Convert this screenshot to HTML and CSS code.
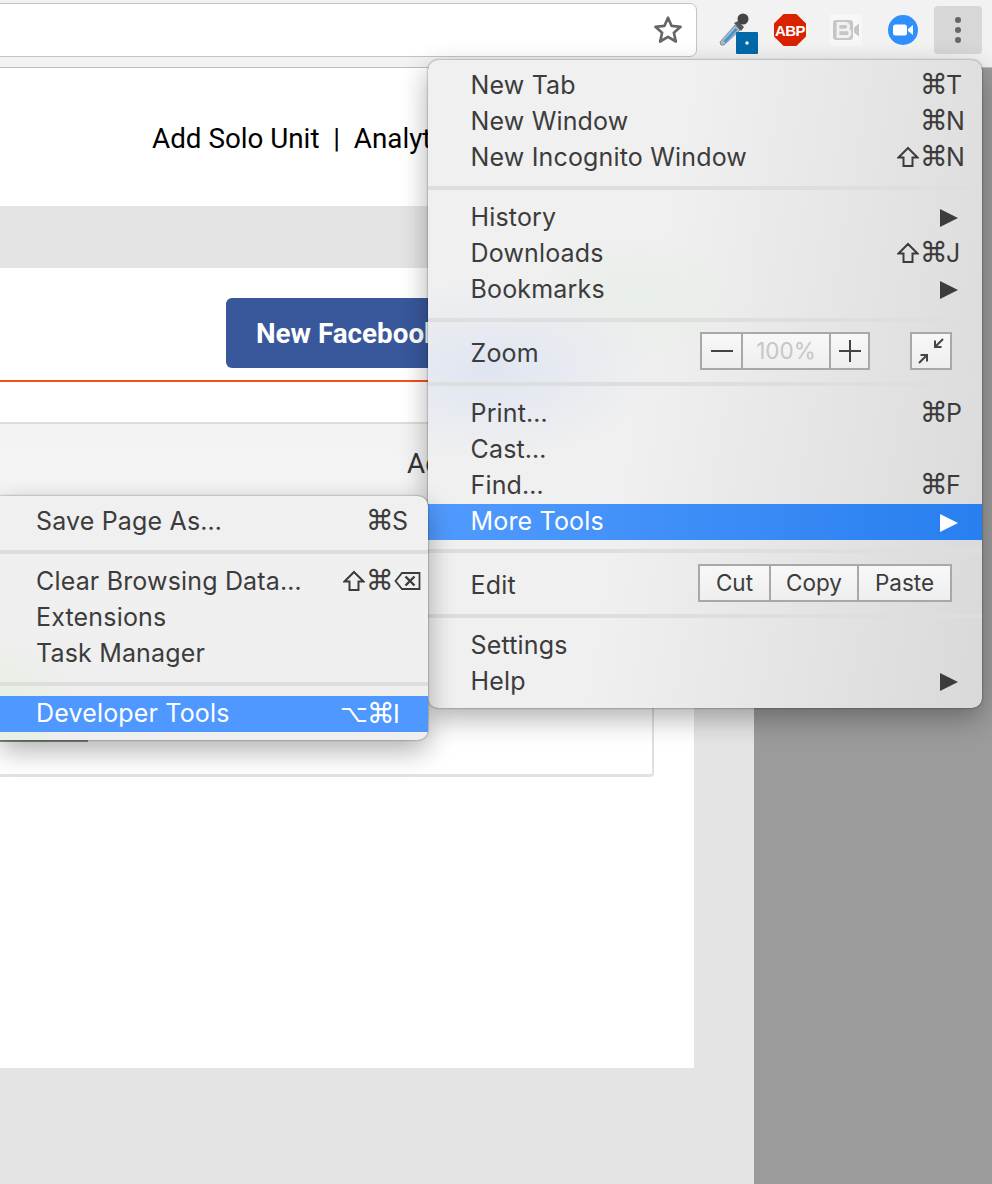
FILE: index.html
```html
<!DOCTYPE html>
<html lang="en">
<head>
<meta charset="utf-8">
<title>Chrome menu</title>
<link rel="stylesheet" href="styles.css">
</head>
<body>
<svg class="defs" width="0" height="0" aria-hidden="true">
  <symbol id="shift" viewBox="0 0 22 22"><path d="M11 2L20.500 11.500H15.500V20H6.500V11.500H1.500z" fill="none" stroke="currentColor" stroke-width="2"/></symbol>
  <symbol id="del" viewBox="0 0 27 20"><path d="M8 2H25.500V18H8L1.500 10z" fill="none" stroke="currentColor" stroke-width="1.800"/><path d="M11.500 5.500L20.500 14.500M20.500 5.500L11.500 14.500" stroke="currentColor" stroke-width="2.400"/></symbol>
</svg>
<header class="toolbar">
  <div class="urlbox">
    <svg class="star" width="32" height="32" viewBox="0 0 30 30"><path d="M15 3.500l3.400 7.700 8.400.8-6.300 5.600 1.900 8.200L15 21.500l-7.400 4.300 1.900-8.200L3.200 12l8.400-.8z" fill="none" stroke="#666" stroke-width="2.500" stroke-linejoin="round"/></svg>
  </div>
  <svg class="ic ic-drop" width="40" height="48" viewBox="0 0 40 48">
    <path d="M1 36L16 19l5 5L5 39l-3 0z" fill="#a9bac6" stroke="#8b9094" stroke-width="1"/>
    <path d="M4.500 35L16.500 22l2 2L6.500 37z" fill="#3f97d8"/>
    <path d="M15 17l4-2 6 6-3 4z" fill="#555"/>
    <circle cx="24" cy="13" r="5.500" fill="#444"/>
    <rect x="17" y="26" width="22" height="22" rx="1" fill="#0469a9"/>
    <circle cx="28" cy="37" r="1.700" fill="#fff"/>
  </svg>
  <div class="ic ic-abp"><span>ABP</span></div>
  <svg class="ic ic-b" width="32" height="32" viewBox="0 0 32 32">
    <rect width="32" height="32" fill="#f7f7f7"/>
    <rect x="3" y="6" width="20" height="20" rx="3" fill="#c6c6c6"/>
    <path d="M8 9.500h7.500a3.200 3.200 0 0 1 1.500 6 3.500 3.500 0 0 1-1 7H8z" fill="none" stroke="#f2f2f2" stroke-width="2.800"/>
    <path d="M8 16h8" stroke="#f2f2f2" stroke-width="2.400"/>
    <path d="M24 13.500l5-4v13l-5-4z" fill="#c6c6c6"/>
  </svg>
  <svg class="ic ic-zoom" width="32" height="32" viewBox="0 0 32 32">
    <circle cx="16" cy="16" r="15" fill="#2e8fff"/>
    <rect x="6" y="10.500" width="14" height="11" rx="2.500" fill="#fff"/>
    <path d="M21 15l5-4v10l-5-4z" fill="#fff"/>
  </svg>
  <div class="kebab"><i></i><i></i><i></i></div>
</header>

<div class="stage">
  <main class="pagewrap">
    <div class="page">
      <div class="topnav">Add Solo Unit&nbsp; |&nbsp; Analytics</div>
      <div class="band"></div>
      <div class="actions"><a class="fbbtn">New Facebook Ad</a></div>
      <section class="card">
        <div class="cardhead">Add</div>
        <div class="cardbody"><span class="peek"></span></div>
      </section>
    </div>
  </main>
  <aside class="devpane"></aside>
</div>

<nav class="menu mainmenu">
  <div class="group">
    <div class="row"><span>New Tab</span><kbd><i class="slot"></i><i class="cmd">⌘</i>T</kbd></div>
    <div class="row"><span>New Window</span><kbd><i class="slot"></i><i class="cmd">⌘</i>N</kbd></div>
    <div class="row"><span>New Incognito Window</span><kbd><i class="slot"><svg width="22" height="22"><use href="#shift"/></svg></i><i class="cmd">⌘</i>N</kbd></div>
  </div>
  <div class="group">
    <div class="row"><span>History</span><b class="tri"></b></div>
    <div class="row"><span>Downloads</span><kbd><i class="slot"><svg width="22" height="22"><use href="#shift"/></svg></i><i class="cmd">⌘</i>J</kbd></div>
    <div class="row"><span>Bookmarks</span><b class="tri"></b></div>
  </div>
  <div class="group">
    <div class="row row-tools"><span>Zoom</span>
      <div class="tools">
        <div class="btngroup zoomctl">
          <div class="btn b-icon"><svg width="24" height="24" viewBox="0 0 24 24"><path d="M1 12h22" stroke="#444" stroke-width="2"/></svg></div>
          <div class="btn b-pct">100%</div>
          <div class="btn b-icon"><svg width="24" height="24" viewBox="0 0 24 24"><path d="M1 12h22M12 1v22" stroke="#444" stroke-width="2"/></svg></div>
        </div>
        <div class="btngroup fullbtn">
          <div class="btn b-full"><svg width="30" height="30" viewBox="0 0 30 30"><path d="M27 3L19 11M19 4.500V11h6.500M3 27l8-8M4.500 19H11v6.500" fill="none" stroke="#444" stroke-width="2"/></svg></div>
        </div>
      </div>
    </div>
  </div>
  <div class="group group-more">
    <div class="row"><span>Print…</span><kbd><i class="slot"></i><i class="cmd">⌘</i>P</kbd></div>
    <div class="row"><span>Cast…</span></div>
    <div class="row"><span>Find…</span><kbd><i class="slot"></i><i class="cmd">⌘</i>F</kbd></div>
    <div class="row active"><span>More Tools</span><b class="tri"></b></div>
  </div>
  <div class="group">
    <div class="row row-tools row-edit"><span>Edit</span>
      <div class="btngroup editctl">
        <div class="btn b-cut">Cut</div>
        <div class="btn b-copy">Copy</div>
        <div class="btn b-paste">Paste</div>
      </div>
    </div>
  </div>
  <div class="group">
    <div class="row"><span>Settings</span></div>
    <div class="row"><span>Help</span><b class="tri"></b></div>
  </div>
</nav>

<nav class="menu submenu">
  <div class="group">
    <div class="row"><span>Save Page As…</span><kbd><i class="slot"></i><i class="cmd">⌘</i>S</kbd></div>
  </div>
  <div class="group">
    <div class="row"><span>Clear Browsing Data…</span><kbd><i class="slot"><svg width="22" height="22"><use href="#shift"/></svg></i><i class="cmd">⌘</i><svg class="delkey" width="27" height="20"><use href="#del"/></svg></kbd></div>
    <div class="row"><span>Extensions</span></div>
    <div class="row"><span>Task Manager</span></div>
  </div>
  <div class="group">
    <div class="row active"><span>Developer Tools</span><kbd><i class="slot opt">⌥</i><i class="cmd">⌘</i>I</kbd></div>
  </div>
</nav>
</body>
</html>
```
FILE: styles.css
```css
* { box-sizing: border-box; }
html, body { margin: 0; height: 100%; }
body {
  width: 992px;
  height: 1184px;
  overflow: hidden;
  position: relative;
  font-family: Roboto, "Liberation Sans", sans-serif;
  background: #e4e4e4;
  display: flex;
  flex-direction: column;
}
.defs { position: absolute; }

/* toolbar */
.toolbar {
  height: 68px;
  flex: none;
  background: #f2f2f2;
  border-bottom: 1px solid #bdbdbd;
  display: flex;
  align-items: center;
  padding-bottom: 7px;
}
.urlbox {
  width: 707px;
  height: 54px;
  margin-left: -10px;
  background: #fff;
  border: 1px solid #c4c4c4;
  border-radius: 7px;
  display: flex;
  align-items: center;
  justify-content: flex-end;
  padding-right: 12px;
}
.ic { flex: none; display: block; }
.ic-drop { margin-left: 22px; }
.ic-abp {
  width: 32px;
  height: 32px;
  margin-left: 15px;
  background: #d92200;
  clip-path: polygon(30% 0, 70% 0, 100% 30%, 100% 70%, 70% 100%, 30% 100%, 0 70%, 0 30%);
  display: flex;
  align-items: center;
  justify-content: center;
}
.ic-abp span {
  color: #fff;
  font: 700 15px "Liberation Sans", sans-serif;
  letter-spacing: -0.6px;
}
.ic-b { margin-left: 24px; }
.ic-zoom { margin-left: 25px; }
.kebab {
  width: 48px;
  height: 48px;
  margin-left: 15px;
  background: #d7d7d7;
  border-radius: 4px;
  display: flex;
  flex-direction: column;
  align-items: center;
  justify-content: center;
  gap: 4px;
}
.kebab i {
  width: 6px;
  height: 6px;
  border-radius: 50%;
  background: #666;
}

/* page behind */
.stage { flex: 1; display: flex; }
.pagewrap { width: 754px; background: #e4e4e4; }
.devpane { flex: 1; background: #9b9b9b; }
.page { width: 694px; height: 1000px; background: #fff; }
.topnav {
  height: 138px;
  padding: 55px 0 0 152px;
  font-size: 27.800px;
  line-height: 32px;
  color: #000;
  white-space: nowrap;
}
.band { height: 62px; background: #e4e4e4; }
.actions {
  height: 114px;
  padding: 30px 0 0 226px;
  border-bottom: 2px solid #f4511e;
}
.fbbtn {
  display: block;
  width: 320px;
  height: 70px;
  background: #38589b;
  border-radius: 6px;
  padding-left: 30px;
  color: #fff;
  font-size: 27.800px;
  font-weight: 700;
  line-height: 71px;
  white-space: nowrap;
}
.card {
  width: 654px;
  height: 355px;
  margin-top: 40px;
  border-top: 2px solid #dcdcdc;
  border-right: 2px solid #e0e0e0;
  border-bottom: 3px solid #e2e2e2;
  border-bottom-right-radius: 4px;
  background: #fff;
}
.cardhead {
  height: 100px;
  background: linear-gradient(#f3f3f3, #f5f5f5);
  padding: 24px 0 0 407px;
  font-size: 27.800px;
  line-height: 32px;
  color: #333;
}
.peek {
  display: block;
  width: 88px;
  height: 218px;
  border-bottom: 3px solid #8a9488;
}

/* menus */
.menu {
  position: absolute;
  background-color: #efefef;
  color: #3c3c3c;
  font-family: Inter, Roboto, sans-serif;
  font-size: 25px;
  letter-spacing: .17px;
  box-shadow: 0 10px 28px rgba(0, 0, 0, .32), 0 0 2px rgba(0, 0, 0, .55);
  display: flex;
  flex-direction: column;
}
.mainmenu {
  left: 428px;
  top: 60px;
  width: 554px;
  height: 648px;
  padding-top: 7px;
  border-radius: 10px;
  background-image:
    radial-gradient(ellipse 170px 90px at 60px 310px, #dfe5f1 0%, rgba(223, 229, 241, 0) 100%),
    radial-gradient(ellipse 120px 70px at 210px 240px, #e8eee8 0%, rgba(232, 238, 232, 0) 100%),
    linear-gradient(100deg, #f0f0f0 40%, #d9d9d9 100%);
}
.submenu {
  left: 0;
  top: 496px;
  width: 428px;
  height: 244px;
  padding-top: 7px;
  border-radius: 0 10px 10px 0;
  background-image:
    radial-gradient(ellipse 80px 70px at 0 210px, #e4efe0 0%, rgba(228, 239, 224, 0) 100%),
    linear-gradient(#f0f0f0, #efefef);
}
.group { display: flex; flex-direction: column; }
.group + .group { margin-top: 11px; border-top: 4px solid #dedede; padding-top: 9px; }
.group-more { margin-bottom: -2px; }
.row {
  height: 36px;
  flex: none;
  display: flex;
  align-items: center;
  justify-content: space-between;
  padding: 0 22px 0 43px;
  white-space: nowrap;
  line-height: 36px;
}
.mainmenu .row { padding-left: 42.500px; }
.submenu .row { padding: 0 20px 0 36px; }
.row-tools { margin-top: 4px; }
.row-edit { margin-top: 5px; }
.row.active { margin-top: 1px; background: linear-gradient(90deg, #519bff, #287fef); color: #fff; }
.row.active span { position: relative; top: -1px; }
.submenu .row.active { background: #4f98ff; }
.row kbd {
  width: 63px;
  flex: none;
  display: flex;
  align-items: center;
  font-family: Inter, sans-serif;
  font-size: 25px;
  letter-spacing: 0;
  color: inherit;
}
.submenu .row kbd { width: 65px; }
.slot {
  width: 24px;
  height: 24px;
  flex: none;
  font-style: normal;
  display: flex;
  align-items: center;
  justify-content: flex-start;
}
.slot svg { display: block; }
.opt {
  font-family: "DejaVu Sans", sans-serif;
  font-size: 24px;
  line-height: 24px;
  width: 26px;
  margin-left: -3px;
}
.cmd {
  width: 26px;
  flex: none;
  margin-left: -1px;
  font-style: normal;
  font-family: "DejaVu Sans", sans-serif;
  font-size: 28px;
  line-height: 36px;
  text-align: left;
}
.opt + .cmd { margin-left: 1px; }
.delkey { flex: none; margin-left: 2px; }
.tri {
  width: 18px;
  height: 18px;
  margin-right: 2px;
  position: relative;
  top: 1px;
  background: currentColor;
  clip-path: polygon(0 0, 100% 50%, 0 100%);
}

/* inline buttons */
.tools { display: flex; gap: 40px; padding-right: 8px; margin-bottom: 4px; }
.btngroup { display: flex; border: 2px solid #a8a8a8; font-size: 22.500px; letter-spacing: 0; color: #3c3c3c; }
.btn {
  height: 34px;
  display: flex;
  align-items: center;
  justify-content: center;
  background: linear-gradient(#f8f8f8, #eee);
}
.btn + .btn { border-left: 2px solid #a8a8a8; }
.b-icon { width: 39px; }
.b-pct { width: 88px; color: #c6c6c6; }
.b-full { width: 38px; }
.b-cut { width: 69px; }
.b-copy { width: 88px; }
.b-paste { width: 93px; }
.editctl { margin-right: 8px; margin-bottom: 4px; }
```
